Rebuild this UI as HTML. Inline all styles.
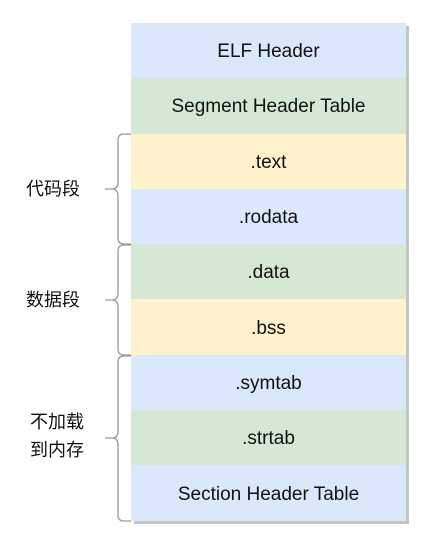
<!DOCTYPE html>
<html><head><style>
body{margin:0;width:446px;height:539px;background:#fff;position:relative;font-family:"Liberation Sans",Helvetica,Arial,sans-serif;overflow:hidden}
.box{position:absolute;left:131px;top:23px;width:275px;box-shadow:3px 3px 0 #c4c4c4}
.r{height:55.3px;display:flex;align-items:center;justify-content:center;font-size:19px;color:#111;padding-top:3px;box-sizing:border-box}
.b{background:#dae8fc}.g{background:#d5e8d4}.y{background:#fff2cc}
.l{position:absolute;font-family:"Liberation Sans","Noto Sans CJK SC",sans-serif;font-size:18px;color:#111;line-height:28px}
</style></head><body>
<div class="box">
<div class="r b">ELF Header</div>
<div class="r g">Segment Header Table</div>
<div class="r y">.text</div>
<div class="r b">.rodata</div>
<div class="r g">.data</div>
<div class="r y">.bss</div>
<div class="r b">.symtab</div>
<div class="r g">.strtab</div>
<div class="r b">Section Header Table</div>
</div>
<svg width="446" height="539" style="position:absolute;left:0;top:0" fill="none" stroke="#999" stroke-width="1.3">
<path d="M131 134 H124 Q118 134 118 140 V182 Q118 189 112 189 H105 M112 189 Q118 189 118 196 V238 Q118 244 124 244 H131"/>
<path d="M131 245 H124 Q118 245 118 251 V293 Q118 300 112 300 H105 M112 300 Q118 300 118 307 V349 Q118 355 124 355 H131"/>
<path d="M131 356 H124 Q118 356 118 362 V431 Q118 438 112 438 H105 M112 438 Q118 438 118 445 V515 Q118 521 124 521 H131"/>
</svg>
<div class="l" style="left:26px;top:175px">代码段</div>
<div class="l" style="left:26px;top:286px">数据段</div>
<div class="l" style="left:30px;top:408px">不加载<br>到内存</div>
</body></html>
